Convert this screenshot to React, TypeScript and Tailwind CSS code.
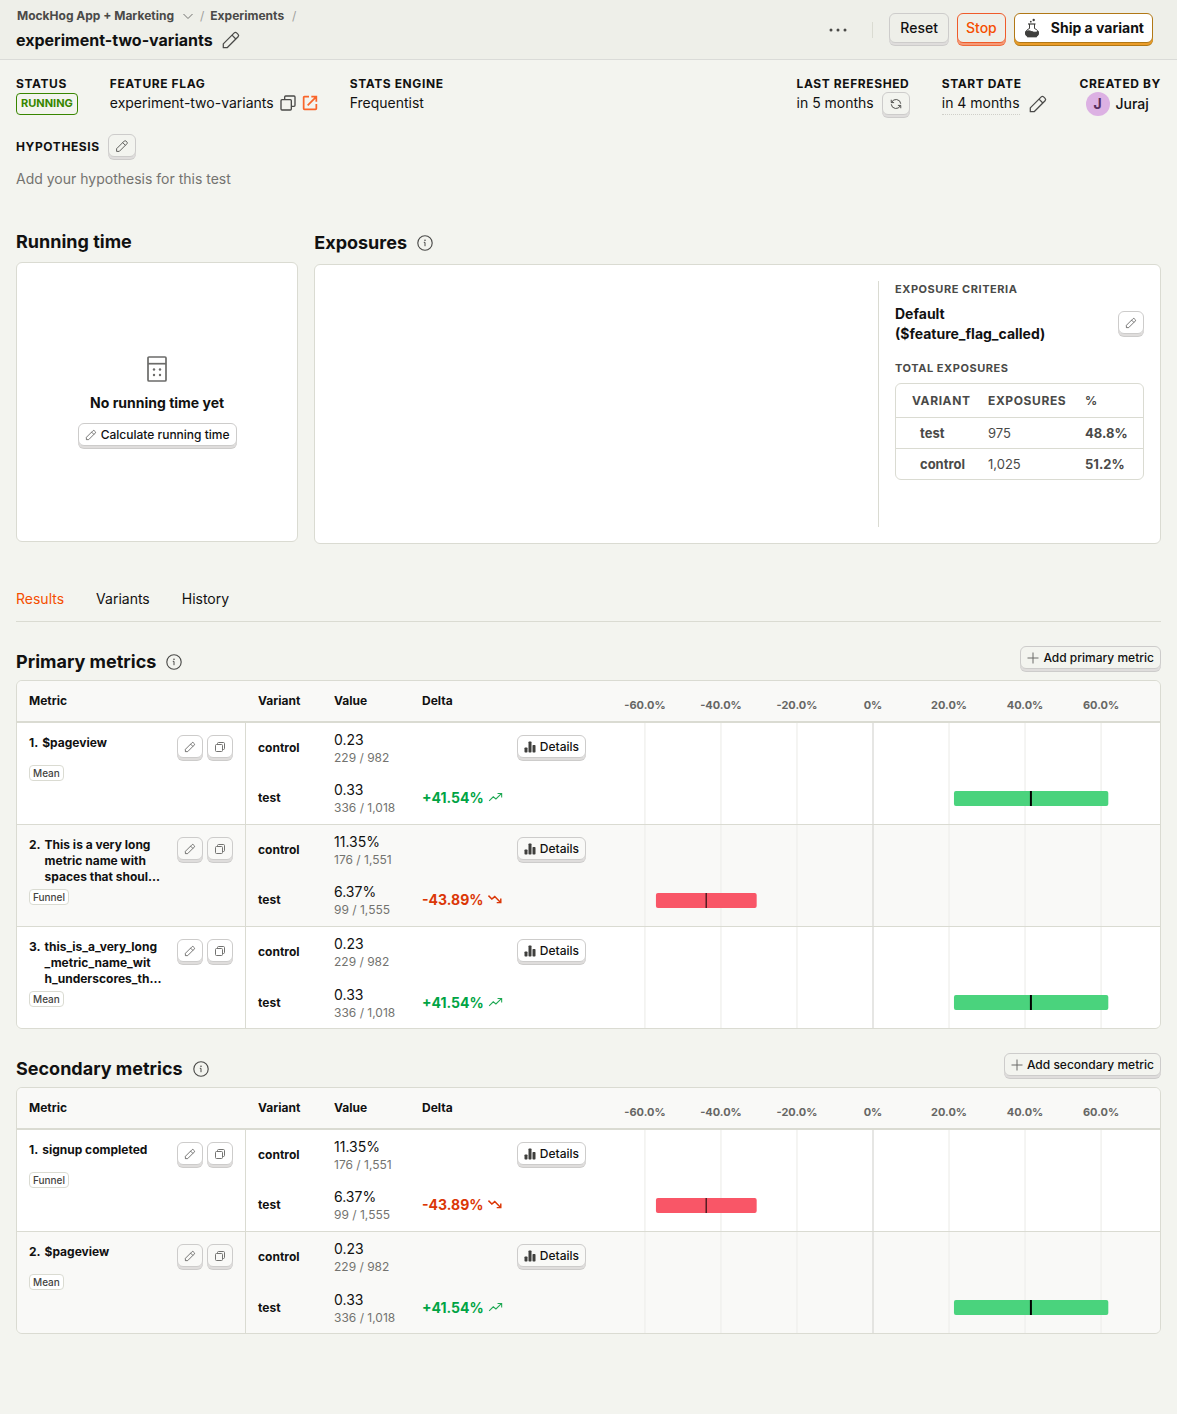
import type { ReactNode } from 'react'

type IconProps = { className?: string }

function PencilIcon({ className = 'size-4' }: IconProps) {
  return (
    <svg className={className} viewBox="0 0 24 24" fill="none" stroke="currentColor" strokeWidth="1.5" strokeLinejoin="round" aria-hidden="true">
      <path d="M2.75 21.25v-4.6L15.9 3.5a2 2 0 0 1 2.8 0l1.8 1.8a2 2 0 0 1 0 2.8L7.35 21.25z" />
      <path d="m13.2 6.2 4.6 4.6" />
    </svg>
  )
}

function CopyIcon({ className = 'size-4' }: IconProps) {
  return (
    <svg className={className} viewBox="0 0 24 24" fill="none" stroke="currentColor" strokeWidth="2" strokeLinejoin="round" aria-hidden="true">
      <rect x="1.500" y="7" width="15.500" height="15.500" rx="1.500" />
      <path d="M7 7V3c0-.8.7-1.500 1.500-1.500H21c.8 0 1.500.7 1.500 1.500v12.500c0 .8-.7 1.500-1.500 1.500h-4" />
    </svg>
  )
}

function SmallCopyIcon() {
  return (
    <svg className="size-3 text-[#737371]" viewBox="0 0 12 12" fill="none" stroke="currentColor" strokeLinejoin="round" aria-hidden="true">
      <rect x="1.500" y="3.500" width="7" height="7" rx="1" />
      <path d="M3.500 3.500v-1c0-.6.4-1 1-1h5c.6 0 1 .4 1 1v5c0 .6-.4 1-1 1h-1" />
    </svg>
  )
}

function ExternalIcon({ className = 'size-4' }: IconProps) {
  return (
    <svg className={className} viewBox="0 0 24 24" fill="none" stroke="currentColor" strokeWidth="2.600" aria-hidden="true">
      <path d="M10.500 2.500H3.700c-.7 0-1.200.5-1.200 1.200v16.600c0 .7.5 1.200 1.200 1.200h16.600c.7 0 1.200-.5 1.200-1.200V13.500" />
      <path d="M14 2.500h7.500V10M20.500 3.500 8.500 15.500" />
    </svg>
  )
}

function InfoIcon({ className = 'size-4' }: IconProps) {
  return (
    <svg className={className} viewBox="0 0 24 24" fill="none" stroke="currentColor" strokeWidth="1.700" aria-hidden="true">
      <circle cx="12" cy="12" r="10.800" />
      <path d="M10.200 11H12v5.800" strokeWidth="1.500" />
      <circle cx="12" cy="7.800" r="1.200" fill="currentColor" stroke="none" />
    </svg>
  )
}

function RefreshIcon({ className = 'size-4' }: IconProps) {
  return (
    <svg className={className} viewBox="0 0 24 24" fill="none" stroke="currentColor" strokeWidth="1.900" aria-hidden="true">
      <path d="M2.500 3.500v5.700h5.700" />
      <path d="M3.200 9A9.500 9.500 0 0 1 21.500 11.500" />
      <path d="M21.500 20.500v-5.700h-5.700" />
      <path d="M20.800 15A9.500 9.500 0 0 1 2.500 12.500" />
    </svg>
  )
}

function FlaskIcon({ className = 'size-4' }: IconProps) {
  return (
    <svg className={className} viewBox="0 0 18 20" fill="none" stroke="currentColor" strokeLinejoin="round" aria-hidden="true">
      <path d="M5 6h7.500" strokeWidth="1.200" />
      <path d="M6.500 6v4.500C4 11.500 2.600 13 2.600 15c0 1.600.8 3 2 3.700h8.800c1.200-.7 2-2.100 2-3.700 0-2-1.400-3.500-3.900-4.500V6" />
      <path d="M2.800 13.600c1.900-1.200 3.800-.9 6 0s4.300 1 6.300-.3c.5 1.900.2 4.200-1.700 5.400H4.600c-1.800-1.100-2.400-3.200-1.800-5.100z" fill="currentColor" />
      <circle cx="7.800" cy="3.700" r=".9" fill="currentColor" stroke="none" />
      <circle cx="10.700" cy="2" r="1.200" fill="currentColor" stroke="none" />
    </svg>
  )
}

function CalculatorIcon({ className = 'size-4' }: IconProps) {
  return (
    <svg className={className} viewBox="0 0 28 28" fill="none" stroke="currentColor" strokeWidth="1.700" aria-hidden="true">
      <rect x="5" y="2" width="18" height="24" rx="1" />
      <path d="M5 8.700h18" />
      <g fill="currentColor" stroke="none">
        <circle cx="11" cy="14.500" r="1.200" />
        <circle cx="17" cy="14.500" r="1.200" />
        <circle cx="11" cy="20" r="1.200" />
        <circle cx="17" cy="20" r="1.200" />
      </g>
    </svg>
  )
}

function BarsIcon({ className = 'size-3' }: IconProps) {
  return (
    <svg className={className} viewBox="0 0 12 12" fill="currentColor" aria-hidden="true">
      <rect x="0.500" y="6.500" width="3" height="5" rx=".7" />
      <rect x="4.500" y="0.500" width="3" height="11" rx=".7" />
      <rect x="8.500" y="4" width="3" height="7.500" rx=".7" />
    </svg>
  )
}

function TrendIcon({ down }: { down: boolean }) {
  return down ? (
    <svg className="size-4 text-[#db3707]" viewBox="0 0 16 16" fill="none" stroke="currentColor" strokeWidth="1.500" aria-hidden="true">
      <path d="M1.500 3.500 5 7l3-2.500 6 6M14.200 6.500v4.200H10" />
    </svg>
  ) : (
    <svg className="size-4 text-[#1fa854]" viewBox="0 0 16 16" fill="none" stroke="currentColor" strokeWidth="1.100" aria-hidden="true">
      <path d="M1.200 11 5.500 6.700l2.800 2.300 5.700-5.500M10 3.300h4.300v4.200" />
    </svg>
  )
}

function PlusIcon() {
  return (
    <svg className="size-3 text-[#6b6b69]" viewBox="0 0 12 12" fill="none" stroke="currentColor" aria-hidden="true">
      <path d="M6 .5v11M.5 6h11" />
    </svg>
  )
}

const raised =
  'mb-[3px] flex shrink-0 items-center justify-center rounded-md border border-[#cdcccb] shadow-[0_2px_0_#dfdddc,0_3px_0_#cdcccb] whitespace-nowrap'

function IconButton({ label, wide, children }: { label: string; wide?: boolean; children: ReactNode }) {
  return (
    <button type="button" aria-label={label} className={`${raised} h-[23px] text-[#4a4a48] ${wide ? 'w-7' : 'w-[26px]'}`}>
      {children}
    </button>
  )
}

function SmallButton({ icon, children }: { icon: ReactNode; children: ReactNode }) {
  return (
    <button type="button" className={`${raised} h-[23px] gap-1 px-1.5 text-xs font-medium`}>
      {icon}
      <span>{children}</span>
    </button>
  )
}

function Field({ label, children }: { label: string; children: ReactNode }) {
  return (
    <div>
      <div className="text-xs leading-4 font-bold tracking-wider uppercase">{label}</div>
      <div className="flex h-[26px] items-start">{children}</div>
    </div>
  )
}

type Row = { value: string; sub: string }
type Metric = {
  name: string
  kind: 'Mean' | 'Funnel'
  control: Row
  test: Row
  delta: string
  low: number
  mid: number
  high: number
}

const pageview = {
  kind: 'Mean' as const,
  control: { value: '0.23', sub: '229 / 982' },
  test: { value: '0.33', sub: '336 / 1,018' },
  delta: '+41.54%',
  low: 21.3,
  mid: 41.54,
  high: 61.9,
}
const signup = {
  kind: 'Funnel' as const,
  control: { value: '11.35%', sub: '176 / 1,551' },
  test: { value: '6.37%', sub: '99 / 1,555' },
  delta: '-43.89%',
  low: -57.1,
  mid: -43.89,
  high: -30.6,
}

const primary: Metric[] = [
  { name: '$pageview', ...pageview },
  { name: 'This is a very long\nmetric name with\nspaces that shoul...', ...signup },
  { name: 'this_is_a_very_long\n_metric_name_wit\nh_underscores_th...', ...pageview },
]
const secondary: Metric[] = [
  { name: 'signup completed', ...signup },
  { name: '$pageview', ...pageview },
]

const ticks = [-60, -40, -20, 0, 20, 40, 60]
const percent = (v: number) => `${50 + (v / 151) * 100}%`

function DeltaChart({ metric }: { metric: Metric }) {
  const up = metric.mid > 0
  return (
    <svg className="block h-[101px] w-full" role="img" aria-label={`Delta ${metric.delta}`}>
      {ticks.map((t) => (
        <line key={t} x1={percent(t)} x2={percent(t)} y1="0" y2="101" stroke={t === 0 ? '#d9d9d6' : '#efefec'} strokeWidth="1.300" />
      ))}
      <rect
        x={percent(metric.low)}
        y="68"
        width={`${((metric.high - metric.low) / 151) * 100}%`}
        height="15"
        rx="2"
        fill={up ? '#4ad37d' : '#f95667'}
      />
      <line x1={percent(metric.mid)} x2={percent(metric.mid)} y1="68" y2="83" stroke="#000" strokeWidth={up ? 2 : 1} />
    </svg>
  )
}

function ValueCell({ row }: { row: Row }) {
  return (
    <>
      <div className="text-sm leading-5">{row.value}</div>
      <div className="text-xs leading-4 text-[#73736f]">{row.sub}</div>
    </>
  )
}

function MetricRows({ metric, index, last }: { metric: Metric; index: number; last: boolean }) {
  const line = last ? '' : 'border-b border-[#dadbd2]'
  const testCell = last ? '' : 'border-b border-[#dadbd2] pb-px'
  const shade = index % 2 ? 'bg-[#f9f9f7]' : 'bg-white'
  const down = metric.mid < 0
  return (
    <tbody className={shade}>
      <tr className="h-[50px]">
        <td rowSpan={2} className={`border-r border-[#dadbd2] p-3 align-top ${last ? '' : 'border-b'}`}>
          <div className="flex gap-2">
            <div className="flex min-w-0 flex-1 gap-1 text-xs leading-4 font-bold">
              <span>{index + 1}.</span>
              <span className="min-w-0 flex-1 whitespace-pre">{metric.name}</span>
            </div>
            <div className="flex items-start gap-1">
              <IconButton label="Edit metric">
                <PencilIcon className="size-3" />
              </IconButton>
              <IconButton label="Duplicate metric">
                <SmallCopyIcon />
              </IconButton>
            </div>
          </div>
          <div className="mt-1 flex">
            <span className="flex h-4 items-center rounded-sm border border-[#dadbd2] bg-white px-[3px] text-[10px] font-medium text-[#444442]">
              {metric.kind}
            </span>
          </div>
        </td>
        <th scope="row" className="px-3 text-left text-xs font-bold">control</th>
        <td className="px-3 whitespace-nowrap">
          <ValueCell row={metric.control} />
        </td>
        <td />
        <td rowSpan={2} className={`pt-3 align-top ${line}`}>
          <div className="flex justify-end">
            <SmallButton icon={<BarsIcon className="size-3 text-[#3f3f3d]" />}>Details</SmallButton>
          </div>
        </td>
        <td rowSpan={2} className={`align-top ${line}`}>
          <DeltaChart metric={metric} />
        </td>
      </tr>
      <tr className={last ? 'h-[51px]' : 'h-[52px]'}>
        <th scope="row" className={`px-3 text-left text-xs font-bold ${testCell}`}>test</th>
        <td className={`px-3 whitespace-nowrap ${testCell}`}>
          <ValueCell row={metric.test} />
        </td>
        <td className={`pl-3 ${testCell}`}>
          <div className={`flex items-center gap-1 text-sm leading-5 font-bold whitespace-nowrap ${down ? 'text-[#db3707]' : 'text-[#00a444]'}`}>
            {metric.delta}
            <TrendIcon down={down} />
          </div>
        </td>
      </tr>
    </tbody>
  )
}

function MetricsSection({ title, action, metrics }: { title: string; action: string; metrics: Metric[] }) {
  return (
    <section className="mt-6">
      <div className="flex h-[34px] items-start justify-between">
        <h2 className="flex h-8 items-center gap-2.5 text-lg font-bold">
          {title}
          <InfoIcon className="size-4 text-[#4a4a48]" />
        </h2>
        <SmallButton icon={<PlusIcon />}>{action}</SmallButton>
      </div>
      <div className="overflow-hidden rounded-md border border-[#dadbd2]">
        <table className="w-full table-fixed border-separate border-spacing-0">
          <colgroup>
            <col className="w-[229px]" />
            <col className="w-[76px]" />
            <col className="w-[88px]" />
            <col className="w-[93px]" />
            <col className="w-[83px]" />
            <col />
          </colgroup>
          <thead className="bg-[#f9f9f7]">
            <tr className="h-[42px] text-left text-xs">
              <th scope="col" className="border-b-2 border-[#dadbd2] px-3 font-bold">Metric</th>
              <th scope="col" className="border-b-2 border-[#dadbd2] px-3 font-bold">Variant</th>
              <th scope="col" className="border-b-2 border-[#dadbd2] px-3 font-bold">Value</th>
              <th scope="col" className="border-b-2 border-[#dadbd2] px-3 font-bold">Delta</th>
              <td className="border-b-2 border-[#dadbd2]" />
              <th scope="col" className="border-b-2 border-[#dadbd2] pt-2">
                <div className="mx-auto grid w-[92.7%] grid-cols-7 text-center text-[11px] leading-4 font-bold text-[#666664]">
                  {ticks.map((t) => (
                    <span key={t}>{t === 0 ? '0%' : `${t}.0%`}</span>
                  ))}
                </div>
              </th>
            </tr>
          </thead>
          {metrics.map((m, i) => (
            <MetricRows key={m.name} metric={m} index={i} last={i === metrics.length - 1} />
          ))}
        </table>
      </div>
    </section>
  )
}

const exposures = [
  { variant: 'test', count: '975', share: '48.8%' },
  { variant: 'control', count: '1,025', share: '51.2%' },
]

export default function App() {
  return (
    <div className="min-h-screen bg-[#f3f4ef] font-['Inter',sans-serif] text-sm text-[#111]">
      <header className="flex h-[60px] items-center justify-between border-b border-[#dadbd8] bg-[#eeefe9] pr-6 pl-4">
        <div>
          <nav className="flex h-4 items-center text-xs font-bold text-[#4a4a48]" aria-label="Breadcrumb">
            <a href="#project" className="flex items-center gap-2 pl-px">
              MockHog App + Marketing
              <svg className="h-2.5 w-3 text-[#737371]" viewBox="0 0 12 10" fill="none" stroke="currentColor" aria-hidden="true">
                <path d="m1.500 3 4.500 4.500L10.500 3" />
              </svg>
            </a>
            <span className="px-1.5 font-normal text-[#a0a09d]">/</span>
            <a href="#experiments">Experiments</a>
            <span className="px-2 font-normal text-[#a0a09d]">/</span>
          </nav>
          <h1 className="mt-1 flex h-6 items-center gap-2 text-base font-bold">
            experiment-two-variants
            <button type="button" aria-label="Rename experiment" className="text-[#4a4a48]">
              <PencilIcon className="size-5" />
            </button>
          </h1>
        </div>
        <div className="flex items-center gap-2">
          <button type="button" aria-label="More" className="mr-4 text-[#4a4a48]">
            <svg className="h-4 w-5" viewBox="0 0 20 16" fill="currentColor" aria-hidden="true">
              <circle cx="3" cy="8" r="1.500" />
              <circle cx="10" cy="8" r="1.500" />
              <circle cx="17" cy="8" r="1.500" />
            </svg>
          </button>
          <span className="mr-2 h-4 w-px bg-[#dadbd2]" />
          <button type="button" className={`${raised} h-[30px] px-2.5 font-medium`}>Reset</button>
          <button
            type="button"
            className="mb-[3px] flex h-[30px] items-center rounded-md border border-[#ef5b2a] px-2 font-medium text-[#f54e00] shadow-[0_2px_0_#f59a78,0_3px_0_#ef6a3c]"
          >
            Stop
          </button>
          <button
            type="button"
            className="mb-[3px] flex h-[30px] items-center gap-2.5 rounded-md border border-[#b17816] bg-white px-2 font-bold shadow-[0_2px_0_#eb9d2a,0_3px_0_#b17816]"
          >
            <FlaskIcon className="h-5 w-[18px] text-[#3f3f3d]" />
            Ship a variant
          </button>
        </div>
      </header>

      <main className="px-4 pt-4">
        <div className="flex justify-between">
          <div className="flex gap-8">
            <Field label="Status">
              <span className="mt-px flex h-[22px] items-center rounded border border-[#388600] px-1 text-[11px] font-bold text-[#388600]">
                RUNNING
              </span>
            </Field>
            <Field label="Feature flag">
              <div className="flex items-center gap-1.5 leading-[22px]">
                experiment-two-variants
                <button type="button" aria-label="Copy flag key" className="text-[#4a4a48]">
                  <CopyIcon className="size-4" />
                </button>
                <a href="#flag" aria-label="Open feature flag" className="text-[#f9652a]">
                  <ExternalIcon className="size-4" />
                </a>
              </div>
            </Field>
            <Field label="Stats engine">
              <span className="leading-[22px]">Frequentist</span>
            </Field>
          </div>
          <div className="flex gap-8">
            <Field label="Last refreshed">
              <div className="flex items-start gap-2 leading-[22px]">
                in 5 months
                <IconButton label="Refresh" wide>
                  <RefreshIcon className="size-3" />
                </IconButton>
              </div>
            </Field>
            <Field label="Start date">
              <div className="flex items-start gap-2 leading-[22px]">
                <span className="border-b border-dotted border-[#cfcfc9]">in 4 months</span>
                <button type="button" aria-label="Edit start date" className="pt-0.5 text-[#4a4a48]">
                  <PencilIcon className="size-5" />
                </button>
              </div>
            </Field>
            <Field label="Created by">
              <div className="flex items-center gap-1.5 pl-1.5">
                <span className="flex size-6 items-center justify-center rounded-full bg-[#dcb1e3] font-bold text-[#572e5e]">J</span>
                <span className="font-medium">Juraj</span>
              </div>
            </Field>
          </div>
        </div>

        <div className="mt-4 flex items-center gap-2">
          <h2 className="text-xs font-bold tracking-wider uppercase">Hypothesis</h2>
          <IconButton label="Edit hypothesis" wide>
            <PencilIcon className="size-3.5" />
          </IconButton>
        </div>
        <p className="mt-2 leading-[22px] text-[#73736f]">Add your hypothesis for this test</p>

        <div className="mt-[38px] grid grid-cols-[1fr_3fr] gap-4">
          <section>
            <h2 className="mb-1.5 text-lg leading-7 font-bold">Running time</h2>
            <div className="flex h-[280px] flex-col items-center justify-center rounded-md border border-[#dadbd2] bg-white">
              <CalculatorIcon className="size-7 text-[#6b6b69]" />
              <h3 className="my-2.5 leading-5 font-bold">No running time yet</h3>
              <SmallButton icon={<PencilIcon className="size-3 text-[#4a4a48]" />}>Calculate running time</SmallButton>
            </div>
          </section>
          <section>
            <h2 className="mb-1.5 flex h-[30px] items-center gap-2.5 text-lg font-bold">
              Exposures
              <InfoIcon className="size-4 text-[#4a4a48]" />
            </h2>
            <div className="flex h-[280px] justify-end rounded-md border border-[#dadbd2] bg-white p-4">
              <div className="w-[266px] border-l border-[#dadbd2] pl-4">
                <h3 className="text-[11px] leading-4 font-bold tracking-wider text-[#4a4a48] uppercase">Exposure criteria</h3>
                <div className="mt-[7px] flex items-center justify-between">
                  <p className="leading-5 font-bold">
                    Default
                    <br />
                    ($feature_flag_called)
                  </p>
                  <IconButton label="Edit exposure criteria">
                    <PencilIcon className="size-3" />
                  </IconButton>
                </div>
                <h3 className="mt-4 text-[11px] leading-4 font-bold tracking-wider text-[#4a4a48] uppercase">Total exposures</h3>
                <div className="mt-[7px] rounded-md border border-[#dadbd2]">
                  <table className="w-full border-separate border-spacing-0 text-left text-[13px] text-[#4a4a48]">
                    <thead>
                      <tr className="h-[34px] text-xs tracking-wider uppercase">
                        <th scope="col" className="w-[84px] border-b border-[#dadbd2] pl-4 font-bold">Variant</th>
                        <th scope="col" className="border-b border-[#dadbd2] pl-2 font-bold">Exposures</th>
                        <th scope="col" className="w-[66px] border-b border-[#dadbd2] pl-2 font-bold">%</th>
                      </tr>
                    </thead>
                    <tbody>
                      {exposures.map((e, i) => {
                        const line = i < exposures.length - 1 ? 'h-[31px] border-b border-[#dadbd2]' : 'h-[30px]'
                        return (
                          <tr key={e.variant}>
                            <th scope="row" className={`pl-6 font-bold ${line}`}>{e.variant}</th>
                            <td className={`pl-2 ${line}`}>{e.count}</td>
                            <td className={`pl-2 font-bold ${line}`}>{e.share}</td>
                          </tr>
                        )
                      })}
                    </tbody>
                  </table>
                </div>
              </div>
            </div>
          </section>
        </div>

        <div role="tablist" className="mt-8 flex h-[46px] gap-8 border-b border-[#dadbd2]">
          <button type="button" role="tab" aria-selected="true" className="text-[#f54e00]">Results</button>
          <button type="button" role="tab" aria-selected="false">Variants</button>
          <button type="button" role="tab" aria-selected="false">History</button>
        </div>

        <MetricsSection title="Primary metrics" action="Add primary metric" metrics={primary} />
        <MetricsSection title="Secondary metrics" action="Add secondary metric" metrics={secondary} />
      </main>
    </div>
  )
}
